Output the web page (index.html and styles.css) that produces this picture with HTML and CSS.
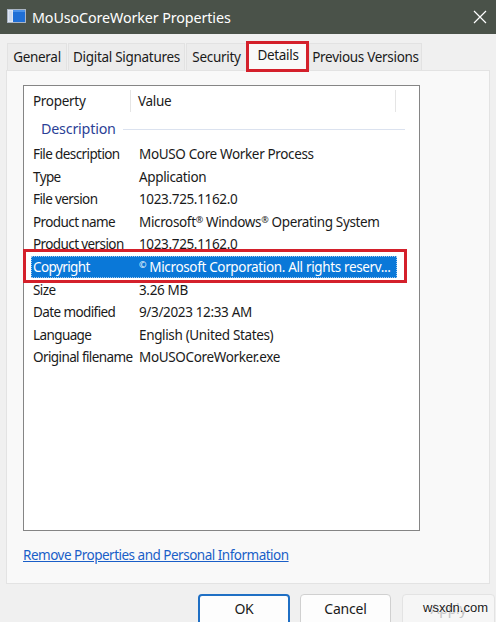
FILE: index.html
```html
<!DOCTYPE html>
<html>
<head>
<meta charset="utf-8">
<link rel="stylesheet" href="styles.css">
</head>
<body>
<div class="window">
  <div class="titlebar">
    <svg class="appicon" width="19" height="14" viewBox="0 0 19 14">
      <rect x="0.5" y="0.5" width="18" height="13" fill="#eef2f8" stroke="#a9b4c4" stroke-width="1"/>
      <rect x="1.5" y="1.5" width="4" height="11" fill="#cdd9ec"/>
      <rect x="6" y="1" width="12" height="12" fill="#1f6fd6"/>
      <rect x="6" y="1" width="12" height="2" fill="#4a92ea"/>
    </svg>
    <span class="title">MoUsoCoreWorker Properties</span>
    <svg class="close" width="14" height="14" viewBox="0 0 14 14">
      <path d="M1 1 L13 13 M13 1 L1 13" stroke="#ffffff" stroke-width="1.2" fill="none"/>
    </svg>
  </div>

  <div class="tabs">
    <div class="tab t-general">General</div>
    <div class="tab t-sign">Digital Signatures</div>
    <div class="tab t-sec">Security</div>
    <div class="tab t-details active">Details<span class="mark mark-tab"></span></div>
    <div class="tab t-prev">Previous Versions</div>
  </div>

  <div class="panel">
    <div class="list">
      <div class="head">
        <div class="hcell hprop">Property</div>
        <div class="hcell hval">Value</div>
        <div class="hcell hrest"></div>
      </div>
      <div class="group"><span class="gname">Description</span><span class="gline"></span></div>
      <div class="row"><span class="prop">File description</span><span class="val">MoUSO Core Worker Process</span></div>
      <div class="row"><span class="prop">Type</span><span class="val">Application</span></div>
      <div class="row"><span class="prop">File version</span><span class="val">1023.725.1162.0</span></div>
      <div class="row"><span class="prop">Product name</span><span class="val">Microsoft<sup>®</sup> Windows<sup>®</sup> Operating System</span></div>
      <div class="row"><span class="prop">Product version</span><span class="val">1023.725.1162.0</span></div>
      <div class="row selected"><span class="prop">Copyright</span><span class="val"><sup>©</sup> Microsoft Corporation. All rights reserv...</span><span class="mark mark-row"></span></div>
      <div class="row"><span class="prop">Size</span><span class="val">3.26 MB</span></div>
      <div class="row"><span class="prop">Date modified</span><span class="val">9/3/2023 12:33 AM</span></div>
      <div class="row"><span class="prop">Language</span><span class="val">English (United States)</span></div>
      <div class="row"><span class="prop">Original filename</span><span class="val">MoUSOCoreWorker.exe</span></div>
    </div>
    <div class="linkrow"><a class="link" href="#">Remove Properties and Personal Information</a></div>
  </div>

  <div class="buttons">
    <div class="btn default">OK</div>
    <div class="btn">Cancel</div>
    <div class="btn disabled">Apply<span class="watermark">wsxdn.com</span></div>
  </div>
</div>
</body>
</html>
```

FILE: styles.css
```css
* { box-sizing: border-box; }
html, body { margin: 0; padding: 0; }
body {
  width: 496px;
  height: 622px;
  overflow: hidden;
  background: #f0f0f0;
  font-family: "Noto Sans", "Open Sans", sans-serif;
  font-size: 13.5px;
  color: #1a1a1a;
}
.window { width: 496px; height: 622px; display: flex; flex-direction: column; }

.titlebar {
  height: 34px;
  background: #4a5249;
  color: #ffffff;
  display: flex;
  align-items: center;
  padding: 0 7px 0 7px;
  flex-shrink: 0;
}
.appicon { flex-shrink: 0; margin-right: 6px; margin-top: -2px; }
.title { font-size: 14.3px; flex: 1; letter-spacing: -0.1px; }
.close { margin-right: 2px; }

.tabs {
  display: flex;
  align-items: flex-end;
  margin-top: 8px;
  padding-left: 7px;
  height: 28px;
  flex-shrink: 0;
}
.tab {
  height: 27px;
  display: flex;
  align-items: center;
  justify-content: center;
  background: #ececec;
  border: 1px solid #e2e2e2;
  border-bottom: none;
  margin-right: 1px;
  color: #1a1a1a;
  letter-spacing: -0.3px;
  white-space: nowrap;
}
.t-general { width: 60px; }
.t-sign { width: 117px; }
.t-sec { width: 61px; }
.t-details { width: 60px; }
.t-prev { width: 113px; }
.tab.active {
  position: relative;
  height: 29px;
  background: #f9f9f9;
  padding-bottom: 4px;
  margin: 0 1px -1px 0;
  z-index: 2;
}
.mark {
  position: absolute;
  border: 3px solid #d4202b;
  pointer-events: none;
}
.mark-tab { left: -3px; top: -2px; right: -2px; bottom: -1px; }

.panel {
  margin: 0 6px;
  height: 514px;
  background: #f9f9f9;
  border: 1px solid #e3e3e3;
  padding: 14px 0 0 16px;
  flex-shrink: 0;
}
.list {
  width: 397px;
  height: 446px;
  background: #ffffff;
  border: 1px solid #858585;
  padding-top: 4px;
}
.head {
  display: flex;
  height: 22px;
  align-items: stretch;
}
.hcell {
  display: flex;
  align-items: center;
  padding-left: 9px;
  border-right: 1px solid #e5e5e5;
  letter-spacing: -0.3px;
}
.hprop { width: 107px; }
.hval { width: 265px; padding-left: 7px; }
.hrest { flex: 1; border-right: none; }

.group {
  display: flex;
  align-items: center;
  height: 31px;
  padding-left: 17px;
  padding-right: 14px;
  padding-top: 2px;
}
.gname { color: #2c3f96; font-size: 14.3px; margin-right: 7px; letter-spacing: -0.2px; }
.gline { flex: 1; height: 1px; background: #dbe2ef; margin-top: 2px; }

.row {
  display: flex;
  align-items: center;
  height: 22.55px;
  padding-left: 9px;
  position: relative;
  letter-spacing: -0.35px;
  white-space: nowrap;
}
.prop { width: 106px; letter-spacing: -0.6px; }
sup { font-size: 9px; vertical-align: 4px; line-height: 0; }
.row.selected { color: #ffffff; }
.row.selected::before {
  content: "";
  position: absolute;
  left: 7px;
  top: 0;
  width: 366px;
  height: 22px;
  background: #0a78d8;
  outline: 1px dotted #9ec9ef;
  outline-offset: -1px;
  z-index: 0;
}
.row.selected .prop, .row.selected .val { position: relative; z-index: 1; }
.mark-row { left: -1px; top: -7px; width: 384px; height: 34px; }

.linkrow { margin-top: 15px; }
.link {
  color: #1a5fc8;
  text-decoration: underline;
  letter-spacing: -0.5px;
}

.buttons {
  display: flex;
  padding: 10px 0 0 198px;
  gap: 10px;
}
.btn {
  width: 91px;
  height: 32px;
  border: 1px solid #d0d0d0;
  border-radius: 4px;
  background: #fdfdfd;
  display: flex;
  align-items: center;
  justify-content: center;
  padding-bottom: 4px;
  color: #1a1a1a;
  font-size: 14px;
  letter-spacing: -0.2px;
}
.btn.default { border: 2px solid #1f6fc4; width: 92px; }
.btn.disabled { color: #c2c2c2; background: #f6f6f6; border-color: #e3e3e3; position: relative; width: 93px; margin-left: 1px; }
.watermark {
  position: absolute;
  left: 20px;
  top: 5px;
  color: #1a1a1a;
  font-family: "Liberation Sans", Arial, sans-serif;
  font-size: 13px;
  letter-spacing: 0;
  white-space: nowrap;
  text-shadow: 0 0 2px #ffffff, 0 0 2px #ffffff;
}
```
